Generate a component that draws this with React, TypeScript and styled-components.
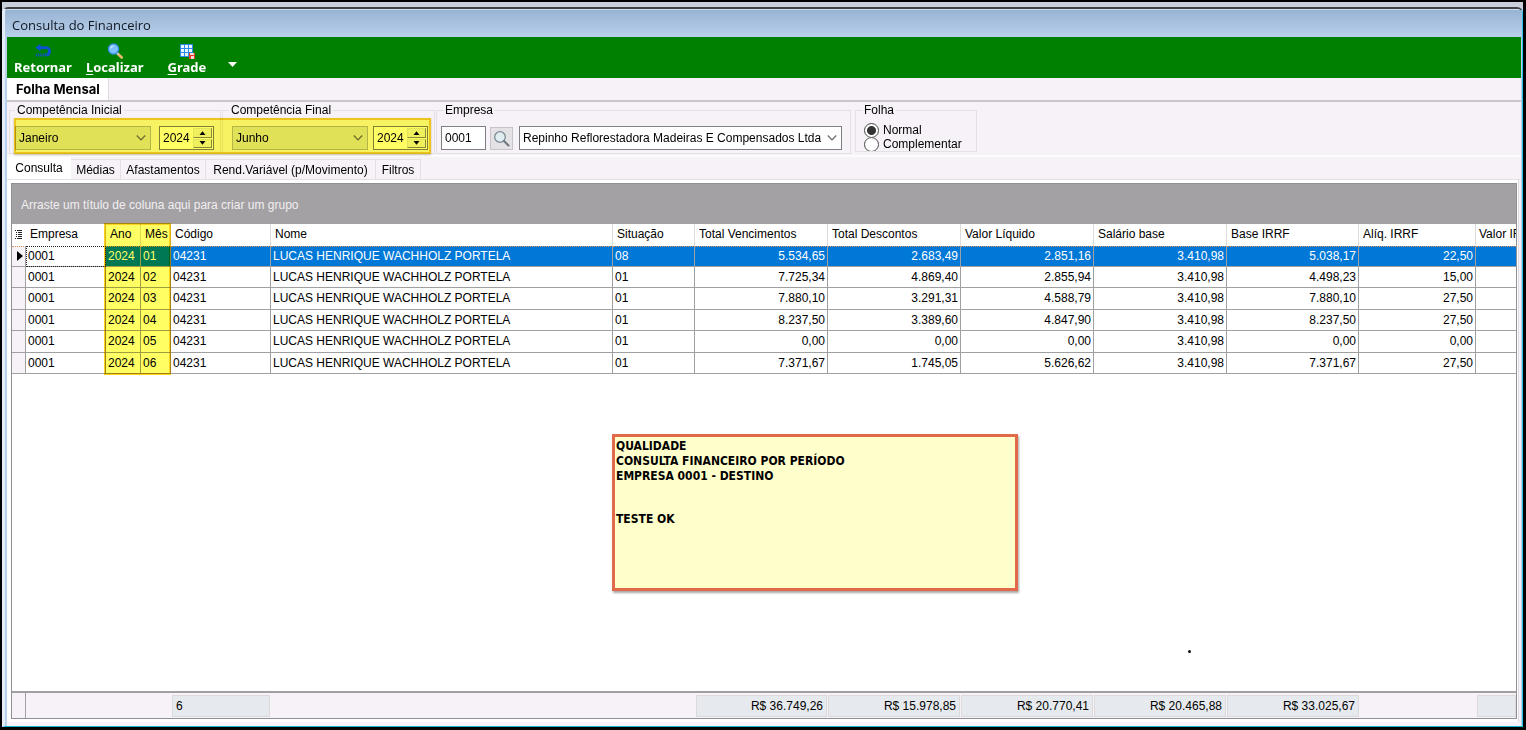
import React from 'react';
import styled, { createGlobalStyle, css } from 'styled-components';

const PANEL = '#f6f2f7';
const LINE = '#a09fa2';
const SOFT = '#e3e1e5';

const Global = createGlobalStyle`
  *, *::before, *::after { box-sizing: border-box; }
  body { margin: 0; background: #000; }
  body, button, input, select, table {
    font-family: "Liberation Sans", Arial, sans-serif;
    font-size: 12px;
    color: #000;
  }
`;

/* ---------- window frame ---------- */

const Desktop = styled.div`
  display: flex;
  min-height: 100vh;
  padding: 2px 3px 3px 2px;
  background: #000;
`;

const Shell = styled.div`
  flex: 1;
  min-width: 0;
  display: flex;
  flex-direction: column;
  padding-top: 5px;
  background: #c9d0dc;
`;

const Frame = styled.div`
  flex: 1;
  display: flex;
  flex-direction: column;
  border-top: 2px solid #3f4347;
  border-left: 3px solid #e4ecf8;
  border-right: 1px solid #2cc3e8;
  border-bottom: 1px solid #12b4d2;
  border-radius: 6px 6px 0 0;
  background: #b9d0ec;
  overflow: hidden;
`;

const TitleBar = styled.header`
  height: 28px;
  padding-left: 7px;
  display: flex;
  align-items: center;
  border-top: 1px solid #cfdcec;
  background: linear-gradient(#98b3d2, #b9d0ec);
`;

const Title = styled.h1`
  margin: 0;
  padding-top: 2px;
  font: 400 13px/18px "Open Sans", sans-serif;
  color: #101820;
`;

const Client = styled.main`
  flex: 1;
  display: flex;
  flex-direction: column;
  margin: 0 1px 0 2px;
  padding-bottom: 4px;
  background: ${PANEL};
`;

/* ---------- toolbar ---------- */

const Toolbar = styled.div`
  display: flex;
  align-items: flex-start;
  height: 41px;
  padding-left: 7px;
  background: #008000;
`;

const ToolButton = styled.button<{ $gap: number }>`
  display: flex;
  flex-direction: column;
  align-items: center;
  margin: 0 ${(p) => p.$gap}px 0 0;
  padding: 6px 0 0;
  border: 0;
  background: none;
  color: #fff;
  font: 700 13px/16px "Noto Sans", sans-serif;

  svg { display: block; height: 16px; }
  u { text-underline-offset: 2px; }
`;

const MoreButton = styled.button`
  margin: 0;
  padding: 25px 0 0;
  border: 0;
  background: none;

  svg { display: block; }
`;

/* ---------- module tab ---------- */

const ModuleBar = styled.div`
  display: flex;
  height: 24px;
  border-bottom: 2px solid #c9c6ca;
`;

const ModuleTab = styled.button`
  padding: 0 8px 0 9px;
  border: 0;
  border-right: 1px solid #dedbdf;
  background: #fff;
  font: 700 13px/20px Inter, sans-serif;
`;

/* ---------- filters ---------- */

const Filters = styled.form`
  display: flex;
  align-items: flex-start;
  padding: 1px 0 1px 2px;
  border-bottom: 2px solid #fdfcfd;
`;

const Period = styled.div`
  position: relative;
  display: flex;
  gap: 1px;
  margin-right: 1px;

  &::after {
    content: "";
    position: absolute;
    top: 15px;
    left: 5px;
    right: 4px;
    height: 36px;
    border: 2px solid #f6cf1c;
    background: #ffff64;
    mix-blend-mode: multiply;
    box-shadow: 0 1px 2px #c8c8b0;
    pointer-events: none;
  }
`;

const Group = styled.fieldset<{ $width: number; $inset: number; $short?: boolean }>`
  width: ${(p) => p.$width}px;
  height: ${(p) => (p.$short ? 49 : 51)}px;
  min-width: 0;
  margin: 0;
  padding: ${(p) => (p.$short ? 6 : 9)}px 0 0 ${(p) => p.$inset}px;
  border: 1px solid ${SOFT};
`;

const Legend = styled.legend<{ $shift: number }>`
  margin-left: ${(p) => p.$shift}px;
  padding: 0 2px;
  line-height: 14px;
`;

const Controls = styled.div`
  display: flex;
  align-items: center;
  height: 24px;
`;

const Combo = styled.div<{ $width: number; $muted?: boolean }>`
  position: relative;
  width: ${(p) => p.$width}px;

  select {
    display: block;
    width: 100%;
    height: 24px;
    padding: 0 20px 0 3px;
    appearance: none;
    border: 1px solid #7f7f81;
    border-radius: 0;
    background: #fff;
    ${(p) => p.$muted && css`
      border-color: #b4b4b6;
      background: #e1e1e1;
    `}
  }

  svg {
    position: absolute;
    top: 8px;
    right: 5px;
    pointer-events: none;
  }
`;

const Spin = styled.div`
  display: flex;
  width: 55px;
  height: 24px;
  padding: 1px;
  border: 1px solid #7f7f81;
  background: #fff;

  input {
    width: 32px;
    padding: 0 0 0 2px;
    border: 0;
    background: none;
    appearance: textfield;
  }
  input::-webkit-inner-spin-button { appearance: none; }
`;

const SpinButtons = styled.div`
  flex: 1;
  display: grid;
  grid-template-rows: 1fr 1fr;
  gap: 1px;

  button {
    display: flex;
    align-items: center;
    justify-content: center;
    padding: 0;
    border: 1px solid #e3e3e3;
    border-right-color: #8a8a8a;
    border-bottom-color: #8a8a8a;
    background: #f0f0f0;
  }
`;

const CodeInput = styled.input`
  width: 45px;
  height: 24px;
  padding: 0 3px;
  border: 1px solid #7f7f81;
`;

const LookupButton = styled.button`
  display: flex;
  align-items: center;
  justify-content: center;
  width: 23px;
  height: 23px;
  padding: 0;
  border: 1px solid #c6c4c8;
  background: #e4e2e5;
`;

const Gap = styled.span<{ $w: number }>`
  flex: 0 0 ${(p) => p.$w}px;
`;

const RadioRow = styled.label`
  display: flex;
  align-items: center;
  gap: 4px;
  height: 14px;
  line-height: 14px;
  overflow: hidden;

  input {
    flex: none;
    width: 15px;
    height: 15px;
    margin: 0;
    appearance: none;
    border: 1px solid #4a4a4a;
    border-radius: 50%;
    background: #fff;
  }
  input:checked {
    background: radial-gradient(circle, #333 0 4px, #fff 5px);
  }
`;

/* ---------- page tabs ---------- */

const PageTabs = styled.div`
  display: flex;
  align-items: flex-end;
  height: 23px;
  border-bottom: 1px solid ${SOFT};
`;

const PageTab = styled.button<{ $width: number; $active?: boolean }>`
  width: ${(p) => p.$width}px;
  height: 20px;
  padding: 0;
  border: 0;
  border-top: 1px solid ${SOFT};
  border-right: 1px solid ${SOFT};
  background: ${PANEL};
  text-align: center;
  white-space: nowrap;
  ${(p) => p.$active && css`
    align-self: stretch;
    height: auto;
    border: 0;
    background: #fff;
  `}
`;

const Page = styled.section`
  flex: 1;
  display: flex;
  margin-right: 2px;
  padding: 3px 1px 3px 4px;
  border-right: 1px solid #dedbe2;
  background: #fff;
`;

/* ---------- grid ---------- */

const Grid = styled.div`
  position: relative;
  flex: 1;
  min-width: 0;
  display: flex;
  flex-direction: column;
  border: 1px solid #8f8f98;
  background: #fff;
`;

const GroupBar = styled.div`
  height: 40px;
  padding: 0 0 0 9px;
  line-height: 42px;
  background: #a4a1a4;
  color: #f1eff1;
`;

const TableWrap = styled.div`
  position: relative;
`;

const ColumnMark = styled.div`
  position: absolute;
  top: -1px;
  bottom: -1px;
  left: 92px;
  width: 67px;
  border: 2px solid #ffd21e;
  background: #ffff64;
  mix-blend-mode: multiply;
  pointer-events: none;
`;

const Table = styled.table`
  width: 100%;
  table-layout: fixed;
  border-collapse: separate;
  border-spacing: 0;
`;

const Th = styled.th`
  height: 22px;
  padding: 0 0 0 4px;
  overflow: hidden;
  border-right: 1px solid #dcdbdd;
  font-weight: 400;
  line-height: 21px;
  text-align: left;
  vertical-align: top;
  white-space: nowrap;

  &:first-child { border-right: 0; padding: 5px 0 0 3px; }
  &:last-child { border-right: 0; padding-left: 3px; }
  svg { display: block; }
`;

const Td = styled.td<{ $num?: boolean }>`
  padding: 0 2px;
  border-right: 1px solid ${LINE};
  border-bottom: 1px solid ${LINE};
  line-height: 20px;
  text-align: ${(p) => (p.$num ? 'right' : 'left')};
  vertical-align: top;
  white-space: nowrap;

  &:first-child { background: ${PANEL}; padding: 0 0 0 5px; }
  &:last-child { border-right: 0; }
  svg { display: block; margin-top: 4px; }
`;

const Row = styled.tr<{ $selected?: boolean }>`
  height: 21px;
  &:nth-child(odd):not(:first-child) { height: 22px; }

  ${(p) => p.$selected && css`
    td { border-top: 1px dotted #d9925a; line-height: 18px; }
    td:nth-child(n + 3) { background: #0078d7; color: #fff; }
    td:nth-child(2) { outline: 1px dotted #222; outline-offset: -1px; }
  `}
`;

const Blank = styled.div`
  flex: 1;
`;

const Totals = styled.div`
  display: grid;
  grid-template-columns: 14px 145px 99px 425px 132px repeat(4, 133px) 117px minmax(0, 1fr);
  align-items: center;
  height: 27px;
  border-top: 2px solid ${LINE};
  background: ${PANEL};
`;

const Marker = styled.span`
  align-self: stretch;
  border-right: 1px solid ${LINE};
`;

const Total = styled.output<{ $left?: boolean }>`
  height: 22px;
  margin-left: 1px;
  padding: 0 3px;
  border: 1px solid #dbd9da;
  background: #e6eaee;
  line-height: 20px;
  text-align: ${(p) => (p.$left ? 'left' : 'right')};
  white-space: nowrap;
`;

/* note pinned over the grid */
const Note = styled.aside`
  position: absolute;
  top: 250px;
  left: 600px;
  width: 406px;
  height: 157px;
  padding: 2px 1px;
  border: 3px solid #e2694a;
  background: #ffffcc;
  box-shadow: 1px 2px 2px #a9a9a9;
  font: 700 12px/15px "DejaVu Sans Condensed", "DejaVu Sans", sans-serif;
  font-stretch: condensed;

  p { margin: 0 0 28px; }
`;

const Speck = styled.i`
  position: absolute;
  top: 466px;
  left: 1176px;
  width: 3px;
  height: 3px;
  border-radius: 50%;
  background: #111;
`;

/* ---------- icons ---------- */

const ReturnIcon = () => (
  <svg width="16" height="16" viewBox="0 0 16 16" fill="none">
    <path d="M5.500 .8 .6 4.600l4.900 3.800V6.300h5.700c1.200 0 1.800.6 1.800 1.700s-.6 1.900-1.600 2.100v3.400c2.900-.3 4.500-2.300 4.500-5.100S14.100 3.200 11.200 3.200H5.500z" fill="#0b52d0" />
    <path d="M1.500 10.400v3M3.700 10.400v3M5.900 10.400v3M8.100 10.400v3M10.200 10.300v3" stroke="#0b52c4" strokeWidth="1.300" />
  </svg>
);

const FindIcon = () => (
  <svg width="16" height="16" viewBox="0 0 16 16" fill="none">
    <path d="m10.500 10.500 4.200 4" stroke="#e8b86a" strokeWidth="2.600" strokeLinecap="round" />
    <path d="m9.600 9.800 1.800 1.600" stroke="#c9d2da" strokeWidth="1.600" />
    <circle cx="6.500" cy="6" r="5.200" fill="#7cc0ff" stroke="#2f86dd" strokeWidth="1.200" />
    <path d="M3.600 5.400a3 3 0 0 1 2.800-2.300" stroke="#cfe8ff" strokeWidth="1.200" />
  </svg>
);

const GridIcon = () => (
  <svg width="16" height="16" viewBox="0 0 16 16">
    <path d="M1 1h13v13H1z" fill="#2b8be6" />
    <path d="M2 2h3v3H2zM6 2h3v3H6zM10 2h3v3h-3zM2 6h3v3H2zM6 6h3v3H6zM10 6h3v3h-3zM2 10h3v3H2zM6 10h3v3H6z" fill="#e9f5ff" />
    <path d="M10 10h6v6h-6z" fill="#e33a2c" />
    <path d="M11 10h4v2h-4zM12 13h3v3h-3z" fill="#fbd9d4" />
  </svg>
);

const Chevron = () => (
  <svg width="10" height="8" viewBox="0 0 10 8" fill="none">
    <path d="m.8 1.500 4.200 4.300 4.200-4.300" stroke="#666" strokeWidth="1.200" />
  </svg>
);

const Triangle = ({ down }: { down?: boolean }) => (
  <svg width="7" height="4" viewBox="0 0 7 4">
    <path d={down ? 'M.5 0h6l-3 3.800z' : 'M.5 4h6l-3-3.800z'} />
  </svg>
);

const LookupIcon = () => (
  <svg width="17" height="17" viewBox="0 0 17 17" fill="none">
    <circle cx="7" cy="7" r="5.300" fill="#e0eef2" stroke="#7c8a94" strokeWidth="1.300" />
    <path d="m11 11 4.500 4.500" stroke="#6c757d" strokeWidth="2" strokeLinecap="round" />
  </svg>
);

const ColumnsIcon = () => (
  <svg width="8" height="12" viewBox="0 0 8 12" shapeRendering="crispEdges">
    <path d="M0 1h1v1H0zM2 1h5v1H2zM1 3h1v1H1zM3 3h4v1H3zM1 5h1v1H1zM3 5h4v1H3zM1 7h1v1H1zM3 7h4v1H3zM0 9h1v1H0zM2 9h5v1H2z" fill="#222" />
  </svg>
);

/* ---------- data ---------- */

const columns: [string, number | undefined][] = [
  ['Empresa', 80], ['Ano', 35], ['Mês', 30], ['Código', 100], ['Nome', 342], ['Situação', 82],
  ['Total Vencimentos', 133], ['Total Descontos', 133], ['Valor Líquido', 133],
  ['Salário base', 133], ['Base IRRF', 132], ['Alíq. IRRF', 117], ['Valor IRRF', undefined],
];

const NAME = 'LUCAS HENRIQUE WACHHOLZ PORTELA';

const rows = [
  ['01', '08', '5.534,65', '2.683,49', '2.851,16', '3.410,98', '5.038,17', '22,50'],
  ['02', '01', '7.725,34', '4.869,40', '2.855,94', '3.410,98', '4.498,23', '15,00'],
  ['03', '01', '7.880,10', '3.291,31', '4.588,79', '3.410,98', '7.880,10', '27,50'],
  ['04', '01', '8.237,50', '3.389,60', '4.847,90', '3.410,98', '8.237,50', '27,50'],
  ['05', '01', '0,00', '0,00', '0,00', '3.410,98', '0,00', '0,00'],
  ['06', '01', '7.371,67', '1.745,05', '5.626,62', '3.410,98', '7.371,67', '27,50'],
];

const totals = ['R$ 36.749,26', 'R$ 15.978,85', 'R$ 20.770,41', 'R$ 20.465,88', 'R$ 33.025,67'];

const pages: [string, number][] = [
  ['Consulta', 64], ['Médias', 50], ['Afastamentos', 85], ['Rend.Variável (p/Movimento)', 170], ['Filtros', 45],
];

const months = ['Janeiro', 'Fevereiro', 'Março', 'Abril', 'Maio', 'Junho'];

function MonthYear({ label, month, gap }: { label: string; month: string; gap: number }) {
  return (
    <Controls>
      <Combo $width={136} $muted>
        <select aria-label={label} defaultValue={month}>
          {months.map((m) => <option key={m}>{m}</option>)}
        </select>
        <Chevron />
      </Combo>
      <Gap $w={gap} />
      <Spin>
        <input type="number" aria-label={`${label}: ano`} defaultValue={2024} />
        <SpinButtons>
          <button type="button" aria-label="Aumentar"><Triangle /></button>
          <button type="button" aria-label="Diminuir"><Triangle down /></button>
        </SpinButtons>
      </Spin>
    </Controls>
  );
}

export default function App() {
  return (
    <Desktop>
      <Global />
      <Shell>
        <Frame>
          <TitleBar><Title>Consulta do Financeiro</Title></TitleBar>
          <Client>
            <Toolbar>
              <ToolButton $gap={14}><ReturnIcon /><span>Retornar</span></ToolButton>
              <ToolButton $gap={24}><FindIcon /><span><u>L</u>ocalizar</span></ToolButton>
              <ToolButton $gap={22}><GridIcon /><span><u>G</u>rade</span></ToolButton>
              <MoreButton aria-label="Mais opções">
                <svg width="9" height="5" viewBox="0 0 9 5"><path d="M0 0h9L4.500 5z" fill="#fff" /></svg>
              </MoreButton>
            </Toolbar>

            <ModuleBar><ModuleTab>Folha Mensal</ModuleTab></ModuleBar>

            <Filters>
              <Period>
                <Group $width={212} $inset={5}>
                  <Legend $shift={0}>Competência Inicial</Legend>
                  <MonthYear label="Competência Inicial" month="Janeiro" gap={8} />
                </Group>
                <Group $width={213} $inset={9}>
                  <Legend $shift={-3}>Competência Final</Legend>
                  <MonthYear label="Competência Final" month="Junho" gap={5} />
                </Group>
              </Period>
              <Group $width={415} $inset={4}>
                <Legend $shift={2}>Empresa</Legend>
                <Controls>
                  <CodeInput aria-label="Código da empresa" defaultValue="0001" />
                  <Gap $w={4} />
                  <LookupButton type="button" aria-label="Procurar empresa"><LookupIcon /></LookupButton>
                  <Gap $w={6} />
                  <Combo $width={323}>
                    <select aria-label="Empresa">
                      <option>Repinho Reflorestadora Madeiras E Compensados Ltda</option>
                    </select>
                    <Chevron />
                  </Combo>
                </Controls>
              </Group>
              <Gap $w={4} />
              <Group $width={122} $inset={8} $short>
                <Legend $shift={-2}>Folha</Legend>
                <RadioRow><input type="radio" name="folha" defaultChecked />Normal</RadioRow>
                <RadioRow><input type="radio" name="folha" />Complementar</RadioRow>
              </Group>
            </Filters>

            <PageTabs>
              {pages.map(([name, width], i) => (
                <PageTab key={name} $width={width} $active={i === 0}>{name}</PageTab>
              ))}
            </PageTabs>

            <Page>
              <Grid>
                <GroupBar>Arraste um título de coluna aqui para criar um grupo</GroupBar>
                <TableWrap>
                  <Table>
                    <colgroup>
                      <col width={14} />
                      {columns.map(([name, width]) => <col key={name} width={width} />)}
                    </colgroup>
                    <thead>
                      <tr>
                        <Th><ColumnsIcon /></Th>
                        {columns.map(([name]) => <Th key={name}>{name}</Th>)}
                      </tr>
                    </thead>
                    <tbody>
                      {rows.map(([month, status, ...values], i) => (
                        <Row key={month} $selected={i === 0}>
                          <Td>
                            {i === 0 && (
                              <svg width="6" height="10" viewBox="0 0 6 10"><path d="M0 0v10l6-5z" /></svg>
                            )}
                          </Td>
                          <Td>0001</Td>
                          <Td>2024</Td>
                          <Td>{month}</Td>
                          <Td>04231</Td>
                          <Td>{NAME}</Td>
                          <Td>{status}</Td>
                          {values.map((v, c) => <Td key={c} $num>{v}</Td>)}
                          <Td />
                        </Row>
                      ))}
                    </tbody>
                  </Table>
                  <ColumnMark />
                </TableWrap>
                <Blank />
                <Totals>
                  <Marker />
                  <span />
                  <Total $left>6</Total>
                  <span />
                  {totals.map((t, i) => <Total key={i}>{t}</Total>)}
                  <span />
                  <Total />
                </Totals>
                <Note>
                  <p>QUALIDADE<br />CONSULTA FINANCEIRO POR PERÍODO<br />EMPRESA 0001 - DESTINO</p>
                  <p>TESTE OK</p>
                </Note>
                <Speck />
              </Grid>
            </Page>
          </Client>
        </Frame>
      </Shell>
    </Desktop>
  );
}
